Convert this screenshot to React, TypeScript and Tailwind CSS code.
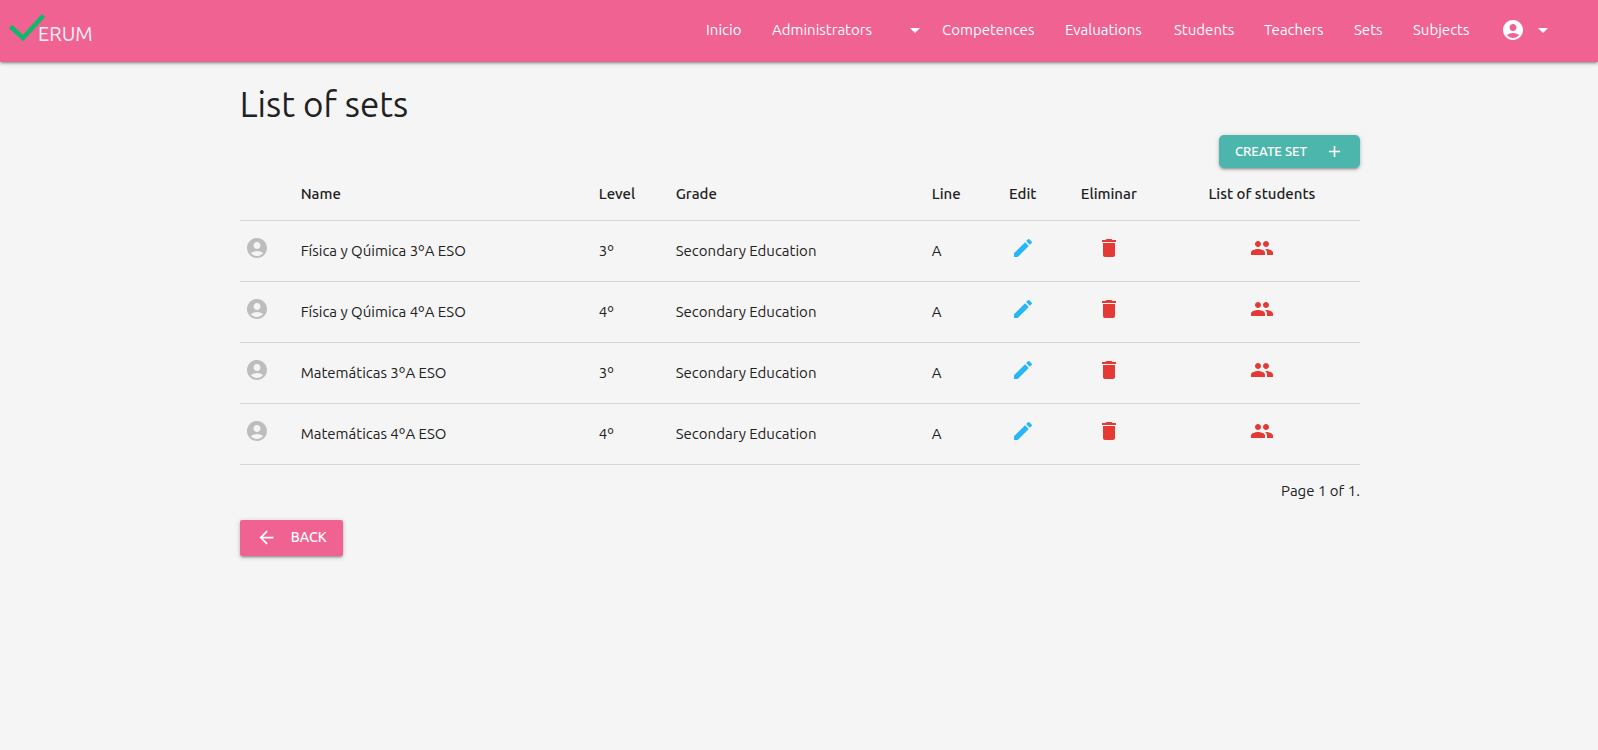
import type { ReactNode } from "react";
import {
  MdAccountCircle,
  MdAdd,
  MdArrowBack,
  MdArrowDropDown,
  MdDelete,
  MdEdit,
  MdPeople,
} from "react-icons/md";

const shadow =
  "shadow-[0_2px_2px_0_rgba(0,0,0,0.14),0_3px_1px_-2px_rgba(0,0,0,0.12),0_1px_5px_0_rgba(0,0,0,0.2)]";

const sets = [
  { name: "Física y Qúimica 3ºA ESO", level: "3º", grade: "Secondary Education", line: "A" },
  { name: "Física y Qúimica 4ºA ESO", level: "4º", grade: "Secondary Education", line: "A" },
  { name: "Matemáticas 3ºA ESO", level: "3º", grade: "Secondary Education", line: "A" },
  { name: "Matemáticas 4ºA ESO", level: "4º", grade: "Secondary Education", line: "A" },
];

const columns = [
  { label: "", style: "w-[56px] text-left" },
  { label: "Name", style: "w-[298px] text-left" },
  { label: "Level", style: "w-[77px] text-left" },
  { label: "Grade", style: "w-[256px] text-left" },
  { label: "Line", style: "w-[65px] text-left" },
  { label: "Edit", style: "w-[62px] text-center" },
  { label: "Eliminar", style: "w-[110px] text-center" },
  { label: "List of students", style: "w-[196px] text-center" },
];

function NavItem({ width, children }: { width: string; children: ReactNode }) {
  return (
    <li className={width}>
      <a href="#" className="flex h-[60px] items-center justify-between whitespace-nowrap pl-[15px]">
        {children}
      </a>
    </li>
  );
}

function Logo() {
  return (
    <a href="#" aria-label="Verum" className="flex items-start pl-2 pt-3">
      <svg viewBox="0 0 38 32" className="h-8 w-[38px]" fill="none" stroke="#0fb96b" strokeWidth="4.500">
        <path d="M2.500 14.500 L15 26 L35.500 3.500" />
      </svg>
      <span className="-ml-2 pt-[10px] text-[20px] leading-6 text-[#fff0f5]">ERUM</span>
    </a>
  );
}

export default function App() {
  return (
    <div className="min-h-screen bg-[#f5f5f5] font-['Ubuntu','Noto_Sans',sans-serif] text-[15px] text-[#212121]">
      <nav className={`flex h-[62px] justify-between bg-[#f06292] text-white ${shadow}`}>
        <Logo />
        <ul className="flex pr-[43px]">
          <NavItem width="w-[66px]">Inicio</NavItem>
          <NavItem width="w-[170px]">
            Administrators
            <MdArrowDropDown className="size-6" />
          </NavItem>
          <NavItem width="w-[123px]">Competences</NavItem>
          <NavItem width="w-[109px]">Evaluations</NavItem>
          <NavItem width="w-[90px]">Students</NavItem>
          <NavItem width="w-[90px]">Teachers</NavItem>
          <NavItem width="w-[59px]">Sets</NavItem>
          <NavItem width="w-[88px]">Subjects</NavItem>
          <NavItem width="w-[69px]">
            <MdAccountCircle className="size-6" />
            <MdArrowDropDown className="size-6" />
          </NavItem>
        </ul>
      </nav>

      <main className="ml-[15%] mr-[14.9%]">
        <h1 className="pt-5 text-[35px] leading-[44px]">List of sets</h1>
        <div className="flex justify-end pt-[9px]">
          <button
            type="button"
            className={`flex h-[33px] items-center gap-[18px] rounded-[5px] bg-[#4db6ac] px-4 text-[13px] font-medium text-white ${shadow}`}
          >
            CREATE SET
            <MdAdd className="size-[19px]" />
          </button>
        </div>

        <table className="w-full table-fixed border-collapse">
          <thead>
            <tr className="h-[52px] border-b border-[#d5d5d5]">
              {columns.map((column) => (
                <th key={column.label} className={`px-[5px] font-medium ${column.style}`}>
                  {column.label}
                </th>
              ))}
            </tr>
          </thead>
          <tbody>
            {sets.map((set) => (
              <tr key={set.name} className="h-[61px] border-b border-[#d5d5d5]">
                <td className="px-[5px] pb-[6px]">
                  <MdAccountCircle className="size-6 text-[#bdbdbd]" />
                </td>
                <td className="px-[5px] pt-[2px]">{set.name}</td>
                <td className="px-[5px] pt-[2px]">{set.level}</td>
                <td className="px-[5px] pt-[2px]">{set.grade}</td>
                <td className="px-[5px] pt-[2px]">{set.line}</td>
                <td className="px-[5px] pb-[6px]">
                  <a href="#" aria-label="Edit" className="flex justify-center text-[#29b6f6]">
                    <MdEdit className="size-6" />
                  </a>
                </td>
                <td className="px-[5px] pb-[6px]">
                  <a href="#" aria-label="Eliminar" className="flex justify-center text-[#e53935]">
                    <MdDelete className="size-6" />
                  </a>
                </td>
                <td className="px-[5px] pb-[6px]">
                  <a href="#" aria-label="List of students" className="flex justify-center text-[#e53935]">
                    <MdPeople className="size-6" />
                  </a>
                </td>
              </tr>
            ))}
          </tbody>
        </table>

        <p className="pt-[14px] text-right leading-6">Page 1 of 1.</p>
        <a
          href="#"
          className={`mt-[17px] inline-flex h-9 items-center gap-[14px] rounded-[2px] bg-[#f06292] px-4 text-[14px] font-medium text-white ${shadow}`}
        >
          <MdArrowBack className="size-[21px]" />
          BACK
        </a>
      </main>
    </div>
  );
}
